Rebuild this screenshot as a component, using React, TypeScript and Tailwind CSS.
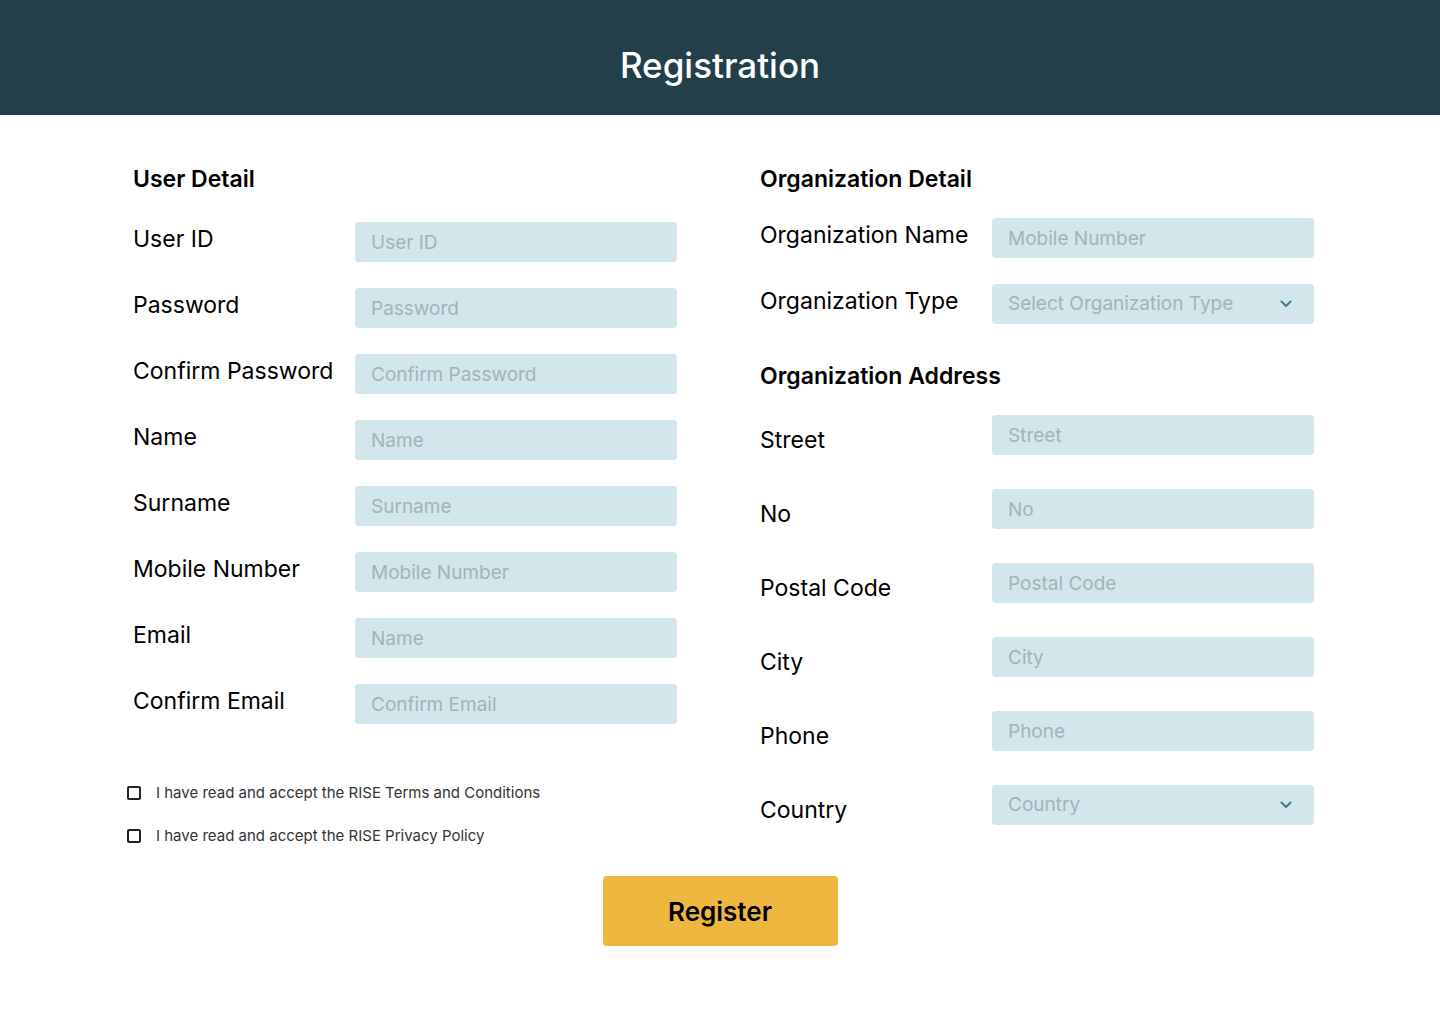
import React from 'react';

const leftFields = [
    { label: 'User ID', placeholder: 'User ID', type: 'text' },
    { label: 'Password', placeholder: 'Password', type: 'password' },
    { label: 'Confirm Password', placeholder: 'Confirm Password', type: 'password' },
    { label: 'Name', placeholder: 'Name', type: 'text' },
    { label: 'Surname', placeholder: 'Surname', type: 'text' },
    { label: 'Mobile Number', placeholder: 'Mobile Number', type: 'text' },
    { label: 'Email', placeholder: 'Name', type: 'email' },
    { label: 'Confirm Email', placeholder: 'Confirm Email', type: 'email' },
];

const addressFields = [
    { label: 'Street', placeholder: 'Street' },
    { label: 'No', placeholder: 'No' },
    { label: 'Postal Code', placeholder: 'Postal Code' },
    { label: 'City', placeholder: 'City' },
    { label: 'Phone', placeholder: 'Phone' },
];

const inputClass =
    'h-10 w-[322px] rounded-[4px] bg-[#d3e6eb] pl-4 text-[19px] text-[#2a3f45] outline-none placeholder:text-[#9fb5ba]';

function Chevron() {
    return (
        <svg width="12" height="8" viewBox="0 0 12 8" fill="none">
            <path d="M1.5 1.5 6 6l4.5-4.5" stroke="#3e7d8c" strokeWidth="2" strokeLinecap="round" strokeLinejoin="round" />
        </svg>
    );
}

function SelectBox({ placeholder }: { placeholder: string }) {
    return (
        <div className="flex h-10 w-[322px] items-center justify-between rounded-[4px] bg-[#d3e6eb] pl-4 pr-[22px] text-[19px] text-[#9fb5ba]">
            <span>{placeholder}</span>
            <Chevron />
        </div>
    );
}

function Checkbox({ label }: { label: string }) {
    return (
        <label className="flex items-center text-[15px] leading-5 text-[#333]">
            <span className="mr-[15px] h-[14px] w-[14px] rounded-[2px] border-2 border-[#222]" />
            {label}
        </label>
    );
}

export default function App() {
    return (
        <div className="min-h-[1024px] bg-white text-black" style={{ fontFamily: 'Inter, "Noto Sans", sans-serif' }}>
            <header className="h-[115px] bg-[#223f4a] pt-[45px] text-center">
                <h1 className="text-[35px] font-medium leading-10 text-white">Registration</h1>
            </header>

            <main className="flex flex-col">
                <div className="flex items-start">
                    {/* user detail */}
                    <section className="ml-[133px] w-[544px] pt-[50px]">
                        <h2 className="text-[23px] font-semibold leading-7">User Detail</h2>
                        <div className="mt-[29px] flex flex-col gap-[26px]">
                            {leftFields.map((f) => (
                                <div key={f.label} className="flex items-start">
                                    <span className="w-[222px] pt-[3px] text-[23px] leading-7">{f.label}</span>
                                    <input type={f.type} placeholder={f.placeholder} className={inputClass} />
                                </div>
                            ))}
                        </div>
                        <div className="-ml-[6px] mt-[59px] flex flex-col gap-[23px]">
                            <Checkbox label="I have read and accept the RISE Terms and Conditions" />
                            <Checkbox label="I have read and accept the RISE Privacy Policy" />
                        </div>
                    </section>

                    {/* organization detail */}
                    <section className="ml-[83px] w-[554px] pt-[50px]">
                        <h2 className="text-[23px] font-semibold leading-7">Organization Detail</h2>
                        <div className="mt-[25px] flex flex-col gap-[26px]">
                            <div className="flex items-start">
                                <span className="w-[232px] pt-[3px] text-[23px] leading-7">Organization Name</span>
                                <input placeholder="Mobile Number" className={inputClass} />
                            </div>
                            <div className="flex items-start">
                                <span className="w-[232px] pt-[3px] text-[23px] leading-7">Organization Type</span>
                                <SelectBox placeholder="Select Organization Type" />
                            </div>
                        </div>

                        <h2 className="mt-[38px] text-[23px] font-semibold leading-7">Organization Address</h2>
                        <div className="mt-[25px] flex flex-col gap-[34px]">
                            {addressFields.map((f) => (
                                <div key={f.label} className="flex items-start">
                                    <span className="w-[232px] pt-[11px] text-[23px] leading-7">{f.label}</span>
                                    <input placeholder={f.placeholder} className={inputClass} />
                                </div>
                            ))}
                            <div className="flex items-start">
                                <span className="w-[232px] pt-[11px] text-[23px] leading-7">Country</span>
                                <SelectBox placeholder="Country" />
                            </div>
                        </div>
                    </section>
                </div>

                <button className="mx-auto mt-[30px] h-[70px] w-[235px] rounded-[4px] bg-[#eeb840] text-[26px] font-semibold text-black">
                    Register
                </button>
            </main>
        </div>
    );
}
